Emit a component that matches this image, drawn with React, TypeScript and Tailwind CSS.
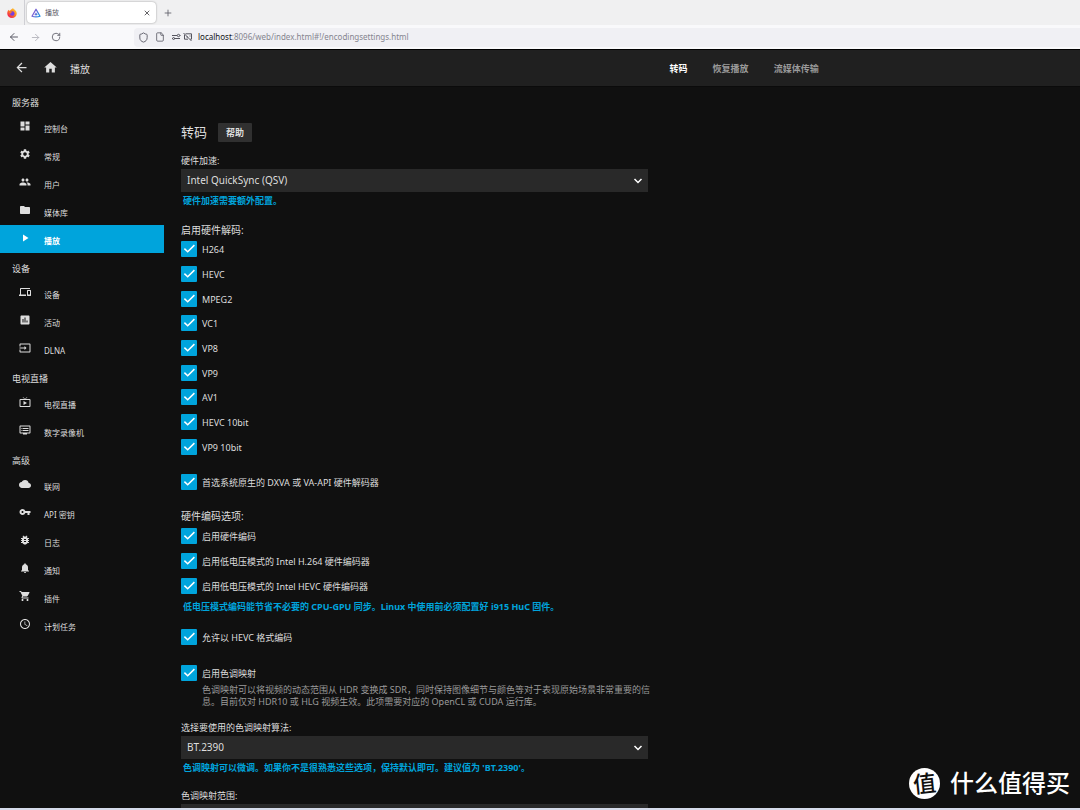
import type { ReactNode } from "react";
import type { IconType } from "react-icons";
import { ArrowLeft, ArrowRight, File, Plus, RotateCw, Shield, X } from "lucide-react";
import {
  MdArrowBack,
  MdAssessment,
  MdBugReport,
  MdCloud,
  MdDashboard,
  MdDevices,
  MdDvr,
  MdFolder,
  MdHome,
  MdInput,
  MdLiveTv,
  MdNotifications,
  MdPeople,
  MdPlayArrow,
  MdSchedule,
  MdSettings,
  MdShoppingCart,
  MdVpnKey,
} from "react-icons/md";

type NavItem = { label: string; icon: IconType; active?: boolean };
type NavSection = { title: string; items: NavItem[] };

const sections: NavSection[] = [
  {
    title: "服务器",
    items: [
      { label: "控制台", icon: MdDashboard },
      { label: "常规", icon: MdSettings },
      { label: "用户", icon: MdPeople },
      { label: "媒体库", icon: MdFolder },
      { label: "播放", icon: MdPlayArrow, active: true },
    ],
  },
  {
    title: "设备",
    items: [
      { label: "设备", icon: MdDevices },
      { label: "活动", icon: MdAssessment },
      { label: "DLNA", icon: MdInput },
    ],
  },
  {
    title: "电视直播",
    items: [
      { label: "电视直播", icon: MdLiveTv },
      { label: "数字录像机", icon: MdDvr },
    ],
  },
  {
    title: "高级",
    items: [
      { label: "联网", icon: MdCloud },
      { label: "API 密钥", icon: MdVpnKey },
      { label: "日志", icon: MdBugReport },
      { label: "通知", icon: MdNotifications },
      { label: "插件", icon: MdShoppingCart },
      { label: "计划任务", icon: MdSchedule },
    ],
  },
];

const codecs = ["H264", "HEVC", "MPEG2", "VC1", "VP8", "VP9", "AV1", "HEVC 10bit", "VP9 10bit"];

const encoders = [
  "启用硬件编码",
  "启用低电压模式的 Intel H.264 硬件编码器",
  "启用低电压模式的 Intel HEVC 硬件编码器",
];

function FirefoxLogo() {
  return (
    <svg viewBox="0 0 20 20" className="size-[10px]">
      <defs>
        <linearGradient id="fox" x1="0.9" y1="0.1" x2="0.2" y2="0.9">
          <stop offset="0" stopColor="#ffd43a" />
          <stop offset="0.45" stopColor="#ff8a1e" />
          <stop offset="1" stopColor="#f0214f" />
        </linearGradient>
      </defs>
      <path
        d="M12 0c1 2 3 3 4 4 2 2 3.5 4 3.5 7A9.5 9 0 0 1 .5 11C.5 8 1.5 5.5 3 3.5L4 5.5 6.5 5C8 3 10 2.5 12 0z"
        fill="url(#fox)"
      />
      <circle cx="10.5" cy="11" r="4.6" fill="#7a3fe0" />
      <path d="M4 7c3-1 5 0 7 1-2 1-3 1-3 3-2 0-4-1-4-4z" fill="#ff7a24" />
    </svg>
  );
}

function JellyfinLogo() {
  return (
    <svg viewBox="0 0 20 20" className="size-[10px]" fill="none" strokeLinejoin="round">
      <defs>
        <linearGradient id="jelly" x1="0" y1="0.3" x2="1" y2="0.8">
          <stop offset="0" stopColor="#9a52cf" />
          <stop offset="1" stopColor="#1c8fe0" />
        </linearGradient>
      </defs>
      <path d="M10 2.5 18 16.5Q10 19 2 16.5Z" stroke="url(#jelly)" strokeWidth="2.6" />
      <path d="M10 9.5 12.6 13.8Q10 14.6 7.4 13.8Z" fill="url(#jelly)" stroke="url(#jelly)" />
    </svg>
  );
}

function PermissionIcons() {
  return (
    <svg viewBox="0 0 22 10" className="h-[10px] w-[22px]" fill="none" stroke="#55555f">
      <path d="M1 3.5h5M3 6.5h6M1 6.5h.8M8.8 3.5h.7" />
      <circle cx="7.5" cy="3.5" r="1.2" />
      <circle cx="2.6" cy="6.5" r="1" />
      <path d="M14.5 1.8h6v5.4h-1.3M17 7.2h-3.5v-4.5M12.5 1l8 8M15.5 5h1.5M18.5 4h1" />
    </svg>
  );
}

function BrowserChrome() {
  return (
    <div className="shrink-0 text-[#5b5b66]">
      <div className="flex h-[25px] items-center bg-[#f0f0f1]">
        <div className="flex h-full w-[25px] items-center justify-center border-r border-[#cfcfd4]">
          <FirefoxLogo />
        </div>
        <div className="ml-0.5 flex h-[21px] w-[129px] items-center rounded-sm bg-white pr-1 pl-1 shadow-[0_0_2px_rgba(0,0,0,0.4)]">
          <JellyfinLogo />
          <span className="ml-1 flex-1 pt-0.5 text-[7px]">播放</span>
          <button type="button" aria-label="关闭标签页" className="p-px text-[#15141a]">
            <X size={8} />
          </button>
        </div>
        <button type="button" aria-label="新建标签页" className="ml-[7px]">
          <Plus size={10} />
        </button>
      </div>
      <div className="flex h-6 items-center bg-[#f9f9fb]">
        <div className="flex w-[134px] items-center gap-[10px] pl-2">
          <button type="button" aria-label="后退">
            <ArrowLeft size={12} />
          </button>
          <button type="button" aria-label="前进" className="text-[#b5b5bc]">
            <ArrowRight size={11} />
          </button>
          <button type="button" aria-label="刷新">
            <RotateCw size={10} />
          </button>
        </div>
        <div className="flex h-[19px] flex-1 items-center rounded-l-sm bg-[#f0f0f4] pl-1">
          <Shield size={11} />
          <File size={10} className="mx-[6px]" />
          <PermissionIcons />
          <span className="ml-[5px] text-[8px] leading-3 text-[#85858f]">
            <span className="text-[#15141a]">localhost</span>:8096/web/index.html#!/encodingsettings.html
          </span>
        </div>
      </div>
    </div>
  );
}

function Header() {
  return (
    <header className="flex h-[38px] shrink-0 items-center border-t border-b border-t-black border-b-[#0b0b0b] bg-[#202020] text-[#dedede]">
      <div className="flex w-[62%] items-center pl-[14px]">
        <button type="button" aria-label="返回" className="pb-0.5">
          <MdArrowBack size={15} />
        </button>
        <button type="button" aria-label="主页" className="ml-[14px] pb-0.5">
          <MdHome size={15} />
        </button>
        <h1 className="ml-3 pt-0.5 text-[10px]">播放</h1>
      </div>
      <nav className="flex gap-[25px] pt-0.5 text-[9px] font-bold text-[#9a9a9a]">
        <a href="#transcoding" className="text-white">
          转码
        </a>
        <a href="#resume">恢复播放</a>
        <a href="#streaming">流媒体传输</a>
      </nav>
    </header>
  );
}

function Sidebar() {
  return (
    <aside className="w-[164px] shrink-0">
      {sections.map((section) => (
        <section key={section.title}>
          <h2 className="flex h-[26px] items-center pt-[6px] pl-3 text-[9px]">{section.title}</h2>
          <ul>
            {section.items.map(({ label, icon: Icon, active }) => (
              <li key={label}>
                <a
                  href="#"
                  className={
                    active
                      ? "flex h-7 items-center bg-[#00a4dc] pl-[19px] font-bold text-white"
                      : "flex h-7 items-center pl-[19px]"
                  }
                >
                  <Icon size={12} className="mb-0.5" />
                  <span className="pt-[3px] pl-[13px] text-[8px]">{label}</span>
                </a>
              </li>
            ))}
          </ul>
        </section>
      ))}
    </aside>
  );
}

function Checkbox({ label }: { label: string }) {
  return (
    <label className="flex min-h-[22px] items-center gap-[5px] text-[9px] leading-3">
      <span className="relative size-4">
        <input type="checkbox" defaultChecked className="peer block size-4 appearance-none rounded-[1px] bg-[#00a4dc]" />
        <svg
          viewBox="0 0 16 16"
          className="pointer-events-none absolute inset-0 hidden size-4 text-white peer-checked:block"
          fill="none"
          stroke="currentColor"
          strokeWidth="1.5"
        >
          <path d="M3.4 7.6 6.7 10.8 13.4 4.1" />
        </svg>
      </span>
      <span className="pt-0.5">{label}</span>
    </label>
  );
}

function SelectField({ id, label, options }: { id: string; label: string; options: string[] }) {
  return (
    <div>
      <label htmlFor={id} className="block text-[9px] leading-3">
        {label}
      </label>
      <div className="relative mt-0.5">
        <select id={id} className="block h-[23px] w-full appearance-none bg-[#292929] pl-[6px] text-[10px]">
          {options.map((option) => (
            <option key={option}>{option}</option>
          ))}
        </select>
        <svg
          viewBox="0 0 10 10"
          className="pointer-events-none absolute top-[7px] right-[5px] size-[10px]"
          fill="none"
          stroke="#ffffff"
          strokeWidth="1.5"
        >
          <path d="M1.5 3 5 6.5 8.5 3" />
        </svg>
      </div>
    </div>
  );
}

function Hint({ children }: { children: ReactNode }) {
  return <p className="mt-[3px] pl-0.5 text-[9px] leading-3 font-bold whitespace-nowrap text-[#00a4dc]">{children}</p>;
}

function TranscodingForm() {
  return (
    <form className="w-full max-w-[467px] pt-9">
      <div className="flex h-[19px] items-center gap-[11px]">
        <h2 className="text-[13px]">转码</h2>
        <button type="button" className="h-[19px] rounded-[1px] bg-[#303030] px-2 text-[9px] font-bold">
          帮助
        </button>
      </div>

      <div className="mt-[13px]">
        <SelectField id="accel" label="硬件加速:" options={["Intel QuickSync (QSV)", "VAAPI", "NVENC"]} />
        <Hint>硬件加速需要额外配置。</Hint>
      </div>

      <h3 className="mt-4 text-[10px] leading-[14px]">启用硬件解码:</h3>
      <div className="grid h-[222px]">
        {codecs.map((codec) => (
          <Checkbox key={codec} label={codec} />
        ))}
      </div>

      <div className="mt-3">
        <Checkbox label="首选系统原生的 DXVA 或 VA-API 硬件解码器" />
      </div>

      <h3 className="mt-4 text-[10px] leading-[14px]">硬件编码选项:</h3>
      <div className="grid h-[75px]">
        {encoders.map((encoder) => (
          <Checkbox key={encoder} label={encoder} />
        ))}
      </div>
      <Hint>低电压模式编码能节省不必要的 CPU-GPU 同步。Linux 中使用前必须配置好 i915 HuC 固件。</Hint>

      <div className="mt-[13px]">
        <Checkbox label="允许以 HEVC 格式编码" />
      </div>

      <div className="mt-[14px]">
        <Checkbox label="启用色调映射" />
        <p className="pl-[21px] text-[9px] leading-3 whitespace-nowrap text-[#9a9a9a]">
          色调映射可以将视频的动态范围从 HDR 变换成 SDR，同时保持图像细节与颜色等对于表现原始场景非常重要的信
          <br />
          息。目前仅对 HDR10 或 HLG 视频生效。此项需要对应的 OpenCL 或 CUDA 运行库。
        </p>
      </div>

      <div className="mt-[14px]">
        <SelectField id="algorithm" label="选择要使用的色调映射算法:" options={["BT.2390", "Hable", "Reinhard"]} />
        <Hint>色调映射可以微调。如果你不是很熟悉这些选项，保持默认即可。建议值为 'BT.2390'。</Hint>
      </div>

      <div className="mt-4">
        <SelectField id="range" label="色调映射范围:" options={["自动", "TV", "PC"]} />
      </div>
    </form>
  );
}

function Watermark() {
  return (
    <div className="absolute right-[10px] bottom-[11px] flex items-center gap-[10px] text-white">
      <span className="flex size-[31px] items-center justify-center rounded-full bg-white text-[23px] leading-8 font-medium text-[#101010]">
        <span className="-rotate-6">值</span>
      </span>
      <span className="text-[24px] leading-8 font-medium">什么值得买</span>
    </div>
  );
}

export default function App() {
  return (
    <div className="relative flex h-screen flex-col overflow-hidden bg-[#101010] font-['Noto_Sans','Noto_Sans_CJK_SC',sans-serif] text-[#dedede]">
      <BrowserChrome />
      <Header />
      <div className="flex min-h-0 flex-1 overflow-hidden">
        <Sidebar />
        <main className="min-w-0 flex-1 px-[17px]">
          <TranscodingForm />
        </main>
      </div>
      <div className="h-0.5 shrink-0 bg-[#d5dbea]" />
      <Watermark />
    </div>
  );
}
